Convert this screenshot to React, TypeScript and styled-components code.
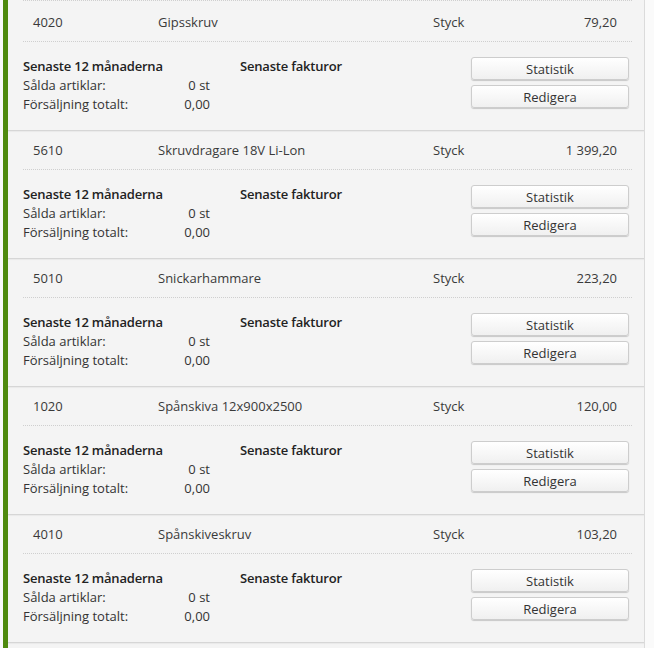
import React from "react";
import styled, { createGlobalStyle } from "styled-components";

const Global = createGlobalStyle`
  html, body { margin: 0; padding: 0; background: #fafafa; }
  body { font-family: "Open Sans", "Noto Sans", sans-serif; font-size: 13px; color: #333; }
`;

const Page = styled.div`
  width: 654px;
  height: 648px;
  overflow: hidden;
  background: #fafafa;
`;

const List = styled.div`
  margin-left: 3px;
  width: 636px;
  height: 648px;
  border-left: 5px solid #4f8a0e;
  border-right: 1px solid #dcdcdc;
  background: #f4f4f4;
  display: flex;
  flex-direction: column;
`;

const TopEdge = styled.div`
  flex: none;
  height: 3px;
  margin: 0 12px 0 15px;
  border-top: 1px dotted #cfcfcf;
  box-sizing: border-box;
`;

const Card = styled.div`
  flex: none;
  height: 127px;
  border-bottom: 1px solid #d6d6d6;
  box-shadow: 0 1px 1px rgba(0, 0, 0, 0.04);
  display: flex;
  flex-direction: column;
`;

const Header = styled.div`
  flex: none;
  height: 38px;
  margin: 0 12px 0 15px;
  padding: 0 15px 0 10px;
  border-bottom: 1px dotted #cfcfcf;
  display: grid;
  grid-template-columns: 125px 275px 1fr auto;
  align-items: center;
  color: #3a3a3a;
  line-height: 18px;
`;

const Price = styled.span`
  text-align: right;
`;

const Body = styled.div`
  display: grid;
  grid-template-columns: 187px 1fr 158px;
  column-gap: 30px;
  padding: 15px 15px 0 15px;
`;

const Stats = styled.div`
  display: flex;
  flex-direction: column;
  line-height: 19px;
`;

const Heading = styled.div`
  font-weight: 600;
  color: #222;
  line-height: 19px;
  letter-spacing: -0.2px;
`;

const StatRow = styled.div`
  display: flex;
  justify-content: space-between;
  color: #333;
`;

const Buttons = styled.div`
  display: flex;
  flex-direction: column;
  gap: 5px;
`;

const Button = styled.button`
  height: 23px;
  width: 158px;
  padding: 0;
  border: 1px solid #cdcdcd;
  border-radius: 3px;
  background: linear-gradient(#ffffff, #f0f0f0);
  box-shadow: 0 1px 1px rgba(0, 0, 0, 0.18);
  font-family: "Open Sans", "Noto Sans", sans-serif;
  font-size: 13px;
  color: #333;
  line-height: 20px;
  cursor: pointer;
`;

type Item = { code: string; name: string; unit: string; price: string };

const items: Item[] = [
  { code: "4020", name: "Gipsskruv", unit: "Styck", price: "79,20" },
  { code: "5610", name: "Skruvdragare 18V Li-Lon", unit: "Styck", price: "1 399,20" },
  { code: "5010", name: "Snickarhammare", unit: "Styck", price: "223,20" },
  { code: "1020", name: "Spånskiva 12x900x2500", unit: "Styck", price: "120,00" },
  { code: "4010", name: "Spånskiveskruv", unit: "Styck", price: "103,20" },
];

function ArticleCard({ item }: { item: Item }) {
  return (
    <Card>
      <Header>
        <span>{item.code}</span>
        <span>{item.name}</span>
        <span>{item.unit}</span>
        <Price>{item.price}</Price>
      </Header>
      <Body>
        <Stats>
          <Heading>Senaste 12 månaderna</Heading>
          <StatRow>
            <span>Sålda artiklar:</span>
            <span>0 st</span>
          </StatRow>
          <StatRow>
            <span>Försäljning totalt:</span>
            <span>0,00</span>
          </StatRow>
        </Stats>
        <div>
          <Heading>Senaste fakturor</Heading>
        </div>
        <Buttons>
          <Button>Statistik</Button>
          <Button>Redigera</Button>
        </Buttons>
      </Body>
    </Card>
  );
}

export default function App() {
  return (
    <>
      <Global />
      <Page>
        <List>
          <TopEdge />
          {items.map((it) => (
            <ArticleCard key={it.code} item={it} />
          ))}
        </List>
      </Page>
    </>
  );
}
